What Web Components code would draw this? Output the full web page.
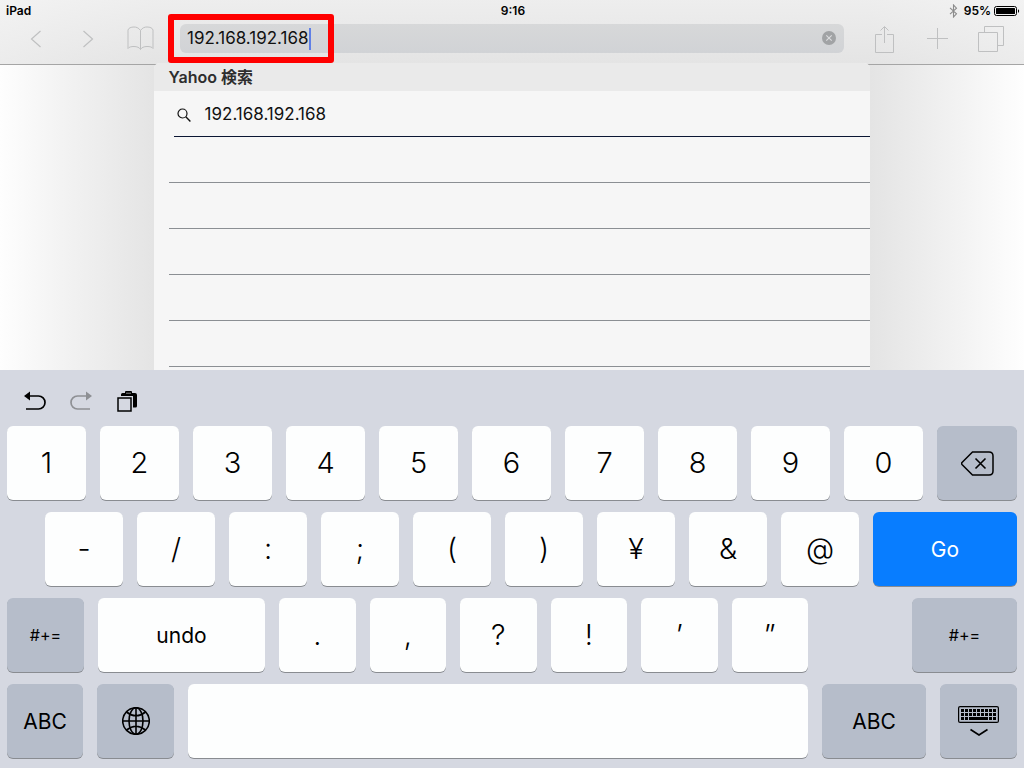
<!DOCTYPE html>
<html lang="ja">
<head>
<meta charset="utf-8">
<meta name="viewport" content="width=device-width, initial-scale=1">
<title>Safari</title>
<style>
  body { margin: 0; color: #000; font-family: Inter, "Noto Sans CJK JP", sans-serif; }
</style>
</head>
<body>

<tablet-screen>
  <status-bar slot="top" device="iPad" time="9:16" battery="95%"></status-bar>
  <browser-bar slot="top" address="192.168.192.168"></browser-bar>
  <suggestion-panel heading="Yahoo 検索" blank-rows="5">
    <suggestion-row>192.168.192.168</suggestion-row>
  </suggestion-panel>
  <soft-keyboard slot="bottom">
    <key-row layout="digits">
      <soft-key>1</soft-key>
      <soft-key>2</soft-key>
      <soft-key>3</soft-key>
      <soft-key>4</soft-key>
      <soft-key>5</soft-key>
      <soft-key>6</soft-key>
      <soft-key>7</soft-key>
      <soft-key>8</soft-key>
      <soft-key>9</soft-key>
      <soft-key>0</soft-key>
      <soft-key kind="dark" label="Delete"><ui-icon name="delete"></ui-icon></soft-key>
    </key-row>
    <key-row layout="symbols">
      <soft-key>-</soft-key>
      <soft-key>/</soft-key>
      <soft-key>:</soft-key>
      <soft-key>;</soft-key>
      <soft-key>(</soft-key>
      <soft-key>)</soft-key>
      <soft-key>¥</soft-key>
      <soft-key>&amp;</soft-key>
      <soft-key>@</soft-key>
      <soft-key kind="go" size="word">Go</soft-key>
    </key-row>
    <key-row layout="marks">
      <soft-key kind="dark" size="small">#+=</soft-key>
      <soft-key size="word">undo</soft-key>
      <soft-key>.</soft-key>
      <soft-key>,</soft-key>
      <soft-key>?</soft-key>
      <soft-key>!</soft-key>
      <soft-key>’</soft-key>
      <soft-key>”</soft-key>
      <span></span>
      <soft-key kind="dark" size="small">#+=</soft-key>
    </key-row>
    <key-row layout="space">
      <soft-key kind="dark" size="word">ABC</soft-key>
      <soft-key kind="dark" label="Next keyboard"><ui-icon name="globe"></ui-icon></soft-key>
      <soft-key label="Space"></soft-key>
      <soft-key kind="dark" size="word">ABC</soft-key>
      <soft-key kind="dark" label="Hide keyboard"><ui-icon name="keyboard"></ui-icon></soft-key>
    </key-row>
  </soft-keyboard>
</tablet-screen>

<script>
// [width, height, markup]
const ICONS = {
  back: [12, 18, '<path d="M10.5 1 1.5 9l9 8" stroke-width="1.2"/>'],
  forward: [12, 18, '<path d="M1.5 1l9 8-9 8" stroke-width="1.2"/>'],
  book: [27, 25, '<path d="M13.5 4.5C11.5 1.5 9 1 7 1 4 1 1.5 2 1 4v18.500C2 21 4 20.5 7 20.5c3 0 5.500 1 6.500 3 1-2 3.500-3 6.500-3s5 .5 6 2V4c-.5-2-3-3-6-3-2 0-4.500.5-6.500 3.500zM13.5 4.500v19"/>'],
  share: [19, 28, '<path d="M7 9.500H.5v18h18v-18H12M9.500 18V2M5.500 5.500l4-4 4 4"/>'],
  plus: [21, 21, '<path d="M10.500 0v21M0 10.500h21"/>'],
  tabs: [26, 26, '<path d="M.5 6.500h19v19H.5zM6.500 6V.5h19v19H20"/>'],
  clear: [14, 14, '<circle cx="7" cy="7" r="7" fill="#a1a3a5" stroke="none"/><path d="M4.300 4.300l5.400 5.400M9.700 4.300L4.300 9.700" stroke="#dcdddf" stroke-width="1.1"/>'],
  bluetooth: [9, 14, '<path d="M1 3.800l6.500 6L4.500 13V1l3 3.200-6.500 6" stroke-width="1.1"/>'],
  battery: [26, 10, '<rect x=".5" y=".5" width="22" height="9" rx="2"/><rect x="2" y="2" width="19" height="6" rx=".5" fill="currentColor" stroke="none"/><path d="M24 3.200c1.500.4 1.500 3.200 0 3.600z" fill="currentColor" stroke="none"/>'],
  search: [14, 14, '<circle cx="5.500" cy="5.500" r="4.500" stroke-width="1.2"/><path d="M8.800 8.800l4.600 4.600" stroke-width="1.4"/>'],
  undo: [22, 20, '<path d="M4 5h10.500a6.500 6.500 0 0 1 0 13H2" stroke-width="1.7"/><path d="M0 5l6-4.500v9z" fill="currentColor" stroke="none"/>'],
  redo: [22, 20, '<path d="M18 5H7.500a6.500 6.500 0 0 0 0 13H20" stroke-width="1.7"/><path d="M22 5l-6-4.500v9z" fill="currentColor" stroke="none"/>'],
  paste: [20, 21, '<path d="M4 5V3.500Q4 2 5.500 2H8V1q0-1 1-1h5q1 0 1 1v1h3q2 0 2 2v11q0 1.500-1.500 1.500H16V5z" fill="currentColor" stroke="none"/><path d="M9 2.200h5" stroke="#aaa" stroke-width=".8"/><path d="M1 7h13v13H1z" fill="#d5d8e1" stroke-width="1.5"/>'],
  delete: [33, 25, '<path d="M11.500 1H28q4 0 4 4v15q0 4-4 4H11.500L1 13.500q-.8-1 0-2z" stroke-width="1.5"/><path d="M14.500 7.500l10 10M24.500 7.500l-10 10" stroke-width="1.6"/>'],
  globe: [28, 28, '<circle cx="14" cy="14" r="13.300"/><ellipse cx="14" cy="14" rx="7" ry="13.300"/><path d="M14 0v28M0 14h28M4.500 5q9.500 7.500 19 0M4.500 23q9.500-7.500 19 0"/>'],
  keyboard: [41, 30, '<rect x=".6" y=".6" width="39.800" height="15.800" rx="1.500" stroke-width="1.2"/><path d="M3 4.500h35M3 8.500h35" stroke-width="3" stroke-dasharray="3 1"/><path d="M3 12.500h7M31 12.500h7" stroke-width="3" stroke-dasharray="3 1"/><path d="M11 12.500h19" stroke-width="3"/><path d="M12.500 23.500l8.500 5.500 8.500-5.500" stroke-width="1.7"/>']
};

class UiIcon extends HTMLElement {
  connectedCallback() {
    const [w, h, shape] = ICONS[this.getAttribute('name')];
    this.attachShadow({ mode: 'open' }).innerHTML = `
      <style>
        :host { display: inline-flex; flex: none; }
        svg { display: block; fill: none; stroke: currentColor; stroke-width: var(--icon-stroke, 1); }
      </style>
      <svg width="${w}" height="${h}" viewBox="0 0 ${w} ${h}" aria-hidden="true">${shape}</svg>`;
  }
}

class TabletScreen extends HTMLElement {
  connectedCallback() {
    this.attachShadow({ mode: 'open' }).innerHTML = `
      <style>
        :host {
          display: flex; flex-direction: column; min-height: 100vh;
          background: linear-gradient(90deg, #fefefe, #f3f3f3 6%, #e4e4e4 15%, #e4e4e4 85%, #f3f3f3 94%, #fefefe);
        }
        header {
          border-bottom: 1px solid #a5a5a5;
          background: linear-gradient(rgba(240, 240, 240, .8), rgba(228, 228, 228, .7));
        }
        main { flex: 1; display: flex; justify-content: center; margin-top: -2px; }
      </style>
      <header><slot name="top"></slot></header>
      <main><slot></slot></main>
      <slot name="bottom"></slot>`;
  }
}

class StatusBar extends HTMLElement {
  connectedCallback() {
    this.attachShadow({ mode: 'open' }).innerHTML = `
      <style>
        :host {
          display: grid; grid-template-columns: 1fr auto 1fr; align-items: center;
          height: 20px; padding: 1px 4px 0 6px; box-sizing: border-box;
          font-size: 12px; font-weight: 600; line-height: 16px;
        }
        .right { display: flex; justify-content: flex-end; align-items: center; gap: 3px; }
        .bt { color: #8c8c8c; margin-right: 3px; }
      </style>
      <span>${this.getAttribute('device')}</span>
      <span>${this.getAttribute('time')}</span>
      <span class="right">
        <ui-icon class="bt" name="bluetooth"></ui-icon>
        <span>${this.getAttribute('battery')}</span>
        <ui-icon name="battery"></ui-icon>
      </span>`;
  }
}

class BrowserBar extends HTMLElement {
  connectedCallback() {
    const tool = (name, label) =>
      `<button type="button" aria-label="${label}"><ui-icon name="${name}"></ui-icon></button>`;
    this.attachShadow({ mode: 'open' }).innerHTML = `
      <style>
        :host {
          display: flex; align-items: center; gap: 14px;
          height: 44px; padding: 0 7px 7px 10px; box-sizing: border-box;
        }
        nav { display: flex; }
        button { padding: 0; border: 0; background: none; color: #bfc0c1; font: inherit; }
        nav button { width: 52px; height: 36px; display: grid; place-items: center; }
        nav:last-child button { width: 53px; }
        .field {
          flex: 1; position: relative; display: flex; align-items: center;
          height: 29px; padding: 0 8px 0 7px; box-sizing: border-box;
          border-radius: 6px; background: linear-gradient(#d7d8d9, #d1d3d6);
        }
        input {
          field-sizing: content; min-width: 0; padding: 0 0 2px; border: 0; outline: 0;
          background: none; color: #111; font: 17px/20px Inter, sans-serif;
        }
        .caret { width: 2px; height: 22px; background: #5f7fe6; }
        .clear { margin-left: auto; }
        /* callout round the typed address */
        .callout {
          position: absolute; left: -12px; top: -10px; width: 166px; height: 49px;
          box-sizing: border-box; border: 6px solid #f00; border-radius: 3px; pointer-events: none;
        }
      </style>
      <nav>${tool('back', 'Back')}${tool('forward', 'Forward')}${tool('book', 'Bookmarks')}</nav>
      <div class="field">
        <input type="text" aria-label="Address" value="${this.getAttribute('address')}">
        <span class="caret"></span>
        <button class="clear" type="button" aria-label="Clear"><ui-icon name="clear"></ui-icon></button>
        <span class="callout"></span>
      </div>
      <nav>${tool('share', 'Share')}${tool('plus', 'New tab')}${tool('tabs', 'Tabs')}</nav>`;
  }
}

class SuggestionPanel extends HTMLElement {
  connectedCallback() {
    const blanks = '<div class="blank"></div>'.repeat(Number(this.getAttribute('blank-rows')));
    this.attachShadow({ mode: 'open' }).innerHTML = `
      <style>
        :host { display: block; width: 70%; background: #f6f6f6; border-radius: 6px 6px 0 0; }
        h2 {
          margin: 0; padding: 0 15px; background: #eaeaea; border-radius: 6px 6px 0 0;
          color: #2e2e2e; font-size: 16px; font-weight: 600; line-height: 28px;
        }
        .blank { height: 46px; margin-left: 15px; box-sizing: border-box; border-bottom: 1px solid #8b8f93; }
      </style>
      <h2>${this.getAttribute('heading')}</h2>
      <slot></slot>
      ${blanks}`;
  }
}

class SuggestionRow extends HTMLElement {
  connectedCallback() {
    this.attachShadow({ mode: 'open' }).innerHTML = `
      <style>
        :host { display: block; margin-left: 20px; border-bottom: 1px solid #0b1633; }
        button {
          display: flex; align-items: center; gap: 14px; width: 100%; height: 45px;
          padding: 0 3px; border: 0; background: none; color: #111; font: inherit; font-size: 17px; text-align: left;
        }
        ui-icon { padding-top: 2px; }
      </style>
      <button type="button"><ui-icon name="search"></ui-icon><slot></slot></button>`;
  }
}

class SoftKeyboard extends HTMLElement {
  connectedCallback() {
    this.attachShadow({ mode: 'open' }).innerHTML = `
      <style>
        :host { display: block; padding: 0 7px 10px; background: #d5d8e1; }
        .tools { display: flex; align-items: center; height: 56px; padding: 6px 5px 0; box-sizing: border-box; }
        .tools button { width: 46px; height: 36px; display: grid; place-items: center; padding: 0; border: 0; background: none; color: #000; }
        .tools button:disabled { color: #8e9094; }
        .rows { display: grid; gap: 12px; }
      </style>
      <div class="tools">
        <button type="button" aria-label="Undo"><ui-icon name="undo"></ui-icon></button>
        <button type="button" aria-label="Redo" disabled><ui-icon name="redo"></ui-icon></button>
        <button type="button" aria-label="Paste"><ui-icon name="paste"></ui-icon></button>
      </div>
      <div class="rows"><slot></slot></div>`;
  }
}

class KeyRow extends HTMLElement {
  connectedCallback() {
    this.attachShadow({ mode: 'open' }).innerHTML = `
      <style>
        :host { display: grid; gap: 14px; grid-auto-rows: 74px; }
        :host([layout="digits"]) { grid-template-columns: repeat(10, 79fr) 80fr; }
        :host([layout="symbols"]) { grid-template-columns: repeat(9, 78fr) 144fr; padding-left: 38px; }
        :host([layout="marks"]) { grid-template-columns: 154fr 334fr repeat(6, 153fr) 152fr 210fr; }
        :host([layout="space"]) { grid-template-columns: 76fr 77fr 620fr 104fr 77fr; }
      </style>
      <slot></slot>`;
  }
}

class SoftKey extends HTMLElement {
  connectedCallback() {
    const label = this.getAttribute('label');
    this.attachShadow({ mode: 'open' }).innerHTML = `
      <style>
        :host { display: grid; min-width: 0; }
        button {
          display: grid; place-items: center; padding: 0 0 2px; border: 0; border-radius: 6px;
          background: #fdfefe; box-shadow: 0 1px 0 #898c91;
          color: #000; font: inherit; font-size: 29px; font-weight: 300; --icon-stroke: 1.6;
        }
        :host([size]) button { padding: 0; font-weight: 400; }
        :host([size="word"]) button { font-size: 21px; }
        :host([size="small"]) button { font-size: 16px; }
        :host([kind="dark"]) button { padding: 0; background: #b6bdca; }
        :host([kind="go"]) button { background: #087dff; color: #fff; }
      </style>
      <button type="button" ${label ? `aria-label="${label}"` : ''}><slot></slot></button>`;
  }
}

customElements.define('ui-icon', UiIcon);
customElements.define('tablet-screen', TabletScreen);
customElements.define('status-bar', StatusBar);
customElements.define('browser-bar', BrowserBar);
customElements.define('suggestion-panel', SuggestionPanel);
customElements.define('suggestion-row', SuggestionRow);
customElements.define('soft-keyboard', SoftKeyboard);
customElements.define('key-row', KeyRow);
customElements.define('soft-key', SoftKey);
</script>
</body>
</html>
